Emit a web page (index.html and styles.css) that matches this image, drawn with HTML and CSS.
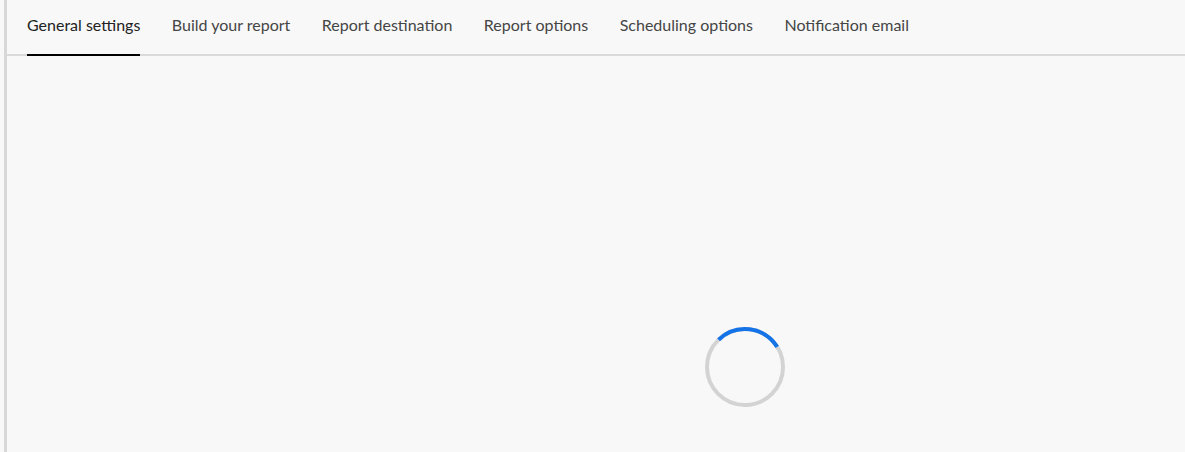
FILE: index.html
```html
<!DOCTYPE html>
<html lang="en">
<head>
<meta charset="utf-8">
<title>Report settings</title>
<link rel="stylesheet" href="styles.css">
</head>
<body>
<div class="page">
  <div class="panel">
    <nav class="tabs">
      <div class="tab active">General settings</div>
      <div class="tab">Build your report</div>
      <div class="tab">Report destination</div>
      <div class="tab">Report options</div>
      <div class="tab">Scheduling options</div>
      <div class="tab">Notification email</div>
    </nav>
    <div class="content">
      <svg class="spinner" width="80" height="80" viewBox="0 0 80 80" aria-label="Loading">
        <circle cx="40" cy="40" r="38" fill="none" stroke="#d3d3d3" stroke-width="4"/>
        <path d="M 13.6 12.7 A 38 38 0 0 1 72.2 19.9" fill="none" stroke="#1473e6" stroke-width="4"/>
      </svg>
    </div>
  </div>
</div>
</body>
</html>
```
FILE: styles.css
```css
html, body {
  margin: 0;
  padding: 0;
  background: #f8f8f8;
}
body {
  font-family: Lato, "Open Sans", "Liberation Sans", sans-serif;
  width: 1185px;
  height: 452px;
  overflow: hidden;
}
.page {
  height: 452px;
  padding-left: 4px;
  box-sizing: border-box;
}
.panel {
  height: 100%;
  border-left: 3px solid #d8d8d8;
  display: flex;
  flex-direction: column;
}
.tabs {
  display: flex;
  align-items: stretch;
  gap: 31.5px;
  padding-left: 20px;
  height: 56px;
  flex: none;
  box-sizing: border-box;
  border-bottom: 2px solid #dadada;
}
.tab {
  font-size: 16px;
  color: #454545;
  line-height: 20px;
  padding-top: 15px;
  box-sizing: border-box;
  white-space: nowrap;
}
.tab.active {
  color: #222;
  position: relative;
}
.tab.active::after {
  content: "";
  position: absolute;
  left: 0;
  right: 0;
  bottom: -2px;
  height: 2px;
  background: #000;
}
.content {
  flex: 1;
  padding-top: 271px;
  padding-left: 698px;
}
.spinner {
  display: block;
}
```
